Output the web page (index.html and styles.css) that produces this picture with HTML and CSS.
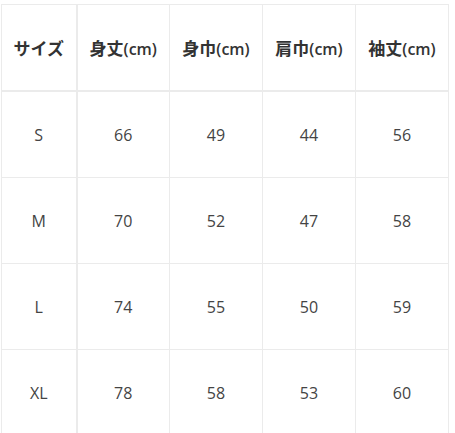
FILE: index.html
```html
<!DOCTYPE html>
<html lang="ja">
<head>
<meta charset="utf-8">
<link rel="stylesheet" href="styles.css">
</head>
<body>
<table class="size-table">
  <colgroup>
    <col class="c1"><col class="c"><col class="c"><col class="c"><col class="c">
  </colgroup>
  <thead>
    <tr>
      <th class="first">サイズ</th>
      <th>身丈<span class="unit">(cm)</span></th>
      <th>身巾<span class="unit">(cm)</span></th>
      <th>肩巾<span class="unit">(cm)</span></th>
      <th>袖丈<span class="unit">(cm)</span></th>
    </tr>
  </thead>
  <tbody>
    <tr><td class="first">S</td><td>66</td><td>49</td><td>44</td><td>56</td></tr>
    <tr><td class="first">M</td><td>70</td><td>52</td><td>47</td><td>58</td></tr>
    <tr><td class="first">L</td><td>74</td><td>55</td><td>50</td><td>59</td></tr>
    <tr><td class="first">XL</td><td>78</td><td>58</td><td>53</td><td>60</td></tr>
  </tbody>
</table>
</body>
</html>
```

FILE: styles.css
```css
html, body {
  margin: 0;
  padding: 0;
  background: #ffffff;
}
body {
  padding: 4px 0 0 1px;
  font-family: "Open Sans", "Noto Sans CJK JP", sans-serif;
}
.size-table {
  border-collapse: collapse;
  table-layout: fixed;
  width: 448px;
}
.c1 { width: 75px; }
.c { width: 93px; }
.size-table th,
.size-table td {
  border: 1px solid #ebebeb;
  padding: 0;
  text-align: center;
  vertical-align: middle;
}
.size-table th {
  height: 85px;
  font-family: "Noto Sans CJK JP", "Open Sans", sans-serif;
  font-weight: 700;
  font-size: 17px;
  color: #333333;
}
.size-table th .unit {
  font-family: "Open Sans", "Noto Sans CJK JP", sans-serif;
  font-weight: 600;
  font-size: 16px;
}
.size-table thead th {
  border-bottom: 2px solid #ebebeb;
}
.size-table td {
  height: 85px;
  font-size: 16px;
  color: #444444;
}
.size-table .first {
  border-right: 2px solid #ebebeb;
}
```
